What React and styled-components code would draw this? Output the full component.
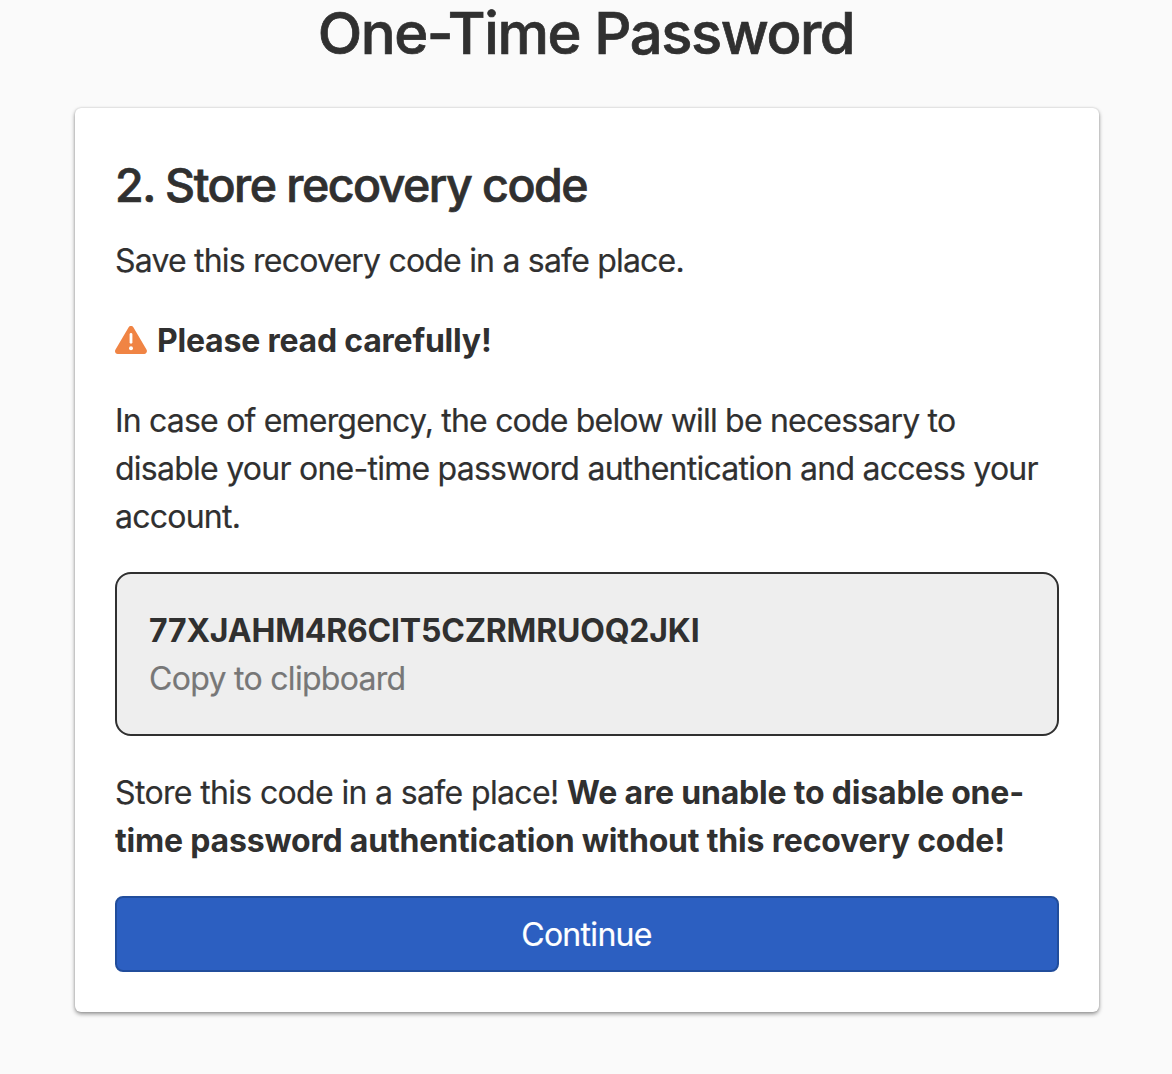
import React from 'react';
import styled, { createGlobalStyle } from 'styled-components';

const GlobalStyle = createGlobalStyle`
  * { box-sizing: border-box; }
  body {
    margin: 0;
    background: #fafafa;
    color: #303030;
    font-family: Inter, "Liberation Sans", sans-serif;
    font-size: 32px;
    line-height: 48px;
  }
`;

const Page = styled.main`
  display: flex;
  flex-direction: column;
  align-items: center;
  height: 1074px;
  padding-left: 2px;
`;

const Title = styled.h1`
  margin: 0 0 41px;
  padding-right: 2px;
  font-size: 58px;
  font-weight: 500;
  line-height: 67px;
  -webkit-text-stroke: 0.7px currentColor;
`;

const Card = styled.section`
  width: 1024px;
  height: 904px;
  padding: 47px 40px 40px;
  background: #fff;
  border-radius: 6px;
  box-shadow: 0 2px 4px rgba(0, 0, 0, 0.42), 0 0 2px rgba(0, 0, 0, 0.16);
`;

const Line = styled.span`
  display: block;
  width: max-content;
  white-space: nowrap;
  letter-spacing: ${(p) => p.$track ?? -0.77}px;
`;

const Bold = styled.strong`
  font-weight: 700;
  letter-spacing: -0.19px;
  -webkit-text-stroke: 0;
`;

const Heading = styled.h2`
  margin: 0 0 22px;
  font-size: 46.5px;
  font-weight: 500;
  line-height: 60px;
  -webkit-text-stroke: 0.7px currentColor;
`;

const Text = styled.p`
  margin: 0 0 ${(p) => p.$gap ?? 32}px;
  -webkit-text-stroke: 0.2px currentColor;
`;

const Warning = styled.div`
  display: flex;
  align-items: center;
  gap: 10px;
  margin-bottom: 32px;
  font-weight: 700;
`;

const CodeBox = styled.div`
  height: 164px;
  margin-bottom: 33px;
  padding: 33px 32px 31px;
  border: 2px solid #303030;
  border-radius: 16px;
  background: #eee;
`;

const Copy = styled.div`
  color: #777;
  -webkit-text-stroke: 0.2px currentColor;
`;

const Button = styled.button`
  display: flex;
  justify-content: center;
  align-items: center;
  width: 100%;
  height: 76px;
  padding: 2px 1px 0 0;
  border: 2px solid #214d9c;
  border-radius: 8px;
  background: #2c5fc1;
  color: #fff;
  font: inherit;
  -webkit-text-stroke: 0.2px currentColor;
`;

const Icon = styled.svg`
  display: block;
  margin-bottom: 2px;
`;

function WarningIcon() {
  return (
    <Icon width="32" height="30" viewBox="0 0 32 30" aria-hidden="true">
      <path d="M13.500 2.400c1.100-1.900 3.900-1.900 5 0l13.100 22.300c1 1.900-.3 4.300-2.400 4.300H2.800c-2.200 0-3.500-2.400-2.400-4.300z" fill="#f08444" />
      <path d="M16 9.500v7.800" stroke="#fff" strokeWidth="2.800" strokeLinecap="round" />
      <circle cx="16" cy="23.300" r="2" fill="#fff" />
    </Icon>
  );
}

export default function App() {
  return (
    <>
      <GlobalStyle />
      <Page>
        <Title><Line $track={-1.45}>One-Time Password</Line></Title>
        <Card>
          <Heading><Line $track={-1.52}>2. Store recovery code</Line></Heading>
          <Text><Line $track={-0.8}>Save this recovery code in a safe place.</Line></Text>
          <Warning><WarningIcon /><Line $track={-0.22}>Please read carefully!</Line></Warning>
          <Text $gap={31}>
            <Line $track={-0.81}>In case of emergency, the code below will be necessary to</Line>
            <Line $track={-0.75}>disable your one-time password authentication and access your</Line>
            <Line>account.</Line>
          </Text>
          <CodeBox>
            <Bold><Line $track={-0.2}>77XJAHM4R6CIT5CZRMRUOQ2JKI</Line></Bold>
            <Copy><Line $track={-0.7}>Copy to clipboard</Line></Copy>
          </CodeBox>
          <Text $gap={31}>
            <Line $track={-0.65}>Store this code in a safe place! <Bold>We are unable to disable one-</Bold></Line>
            <Line $track={-0.18}><Bold>time password authentication without this recovery code!</Bold></Line>
          </Text>
          <Button><Line $track={-0.7}>Continue</Line></Button>
        </Card>
      </Page>
    </>
  );
}
